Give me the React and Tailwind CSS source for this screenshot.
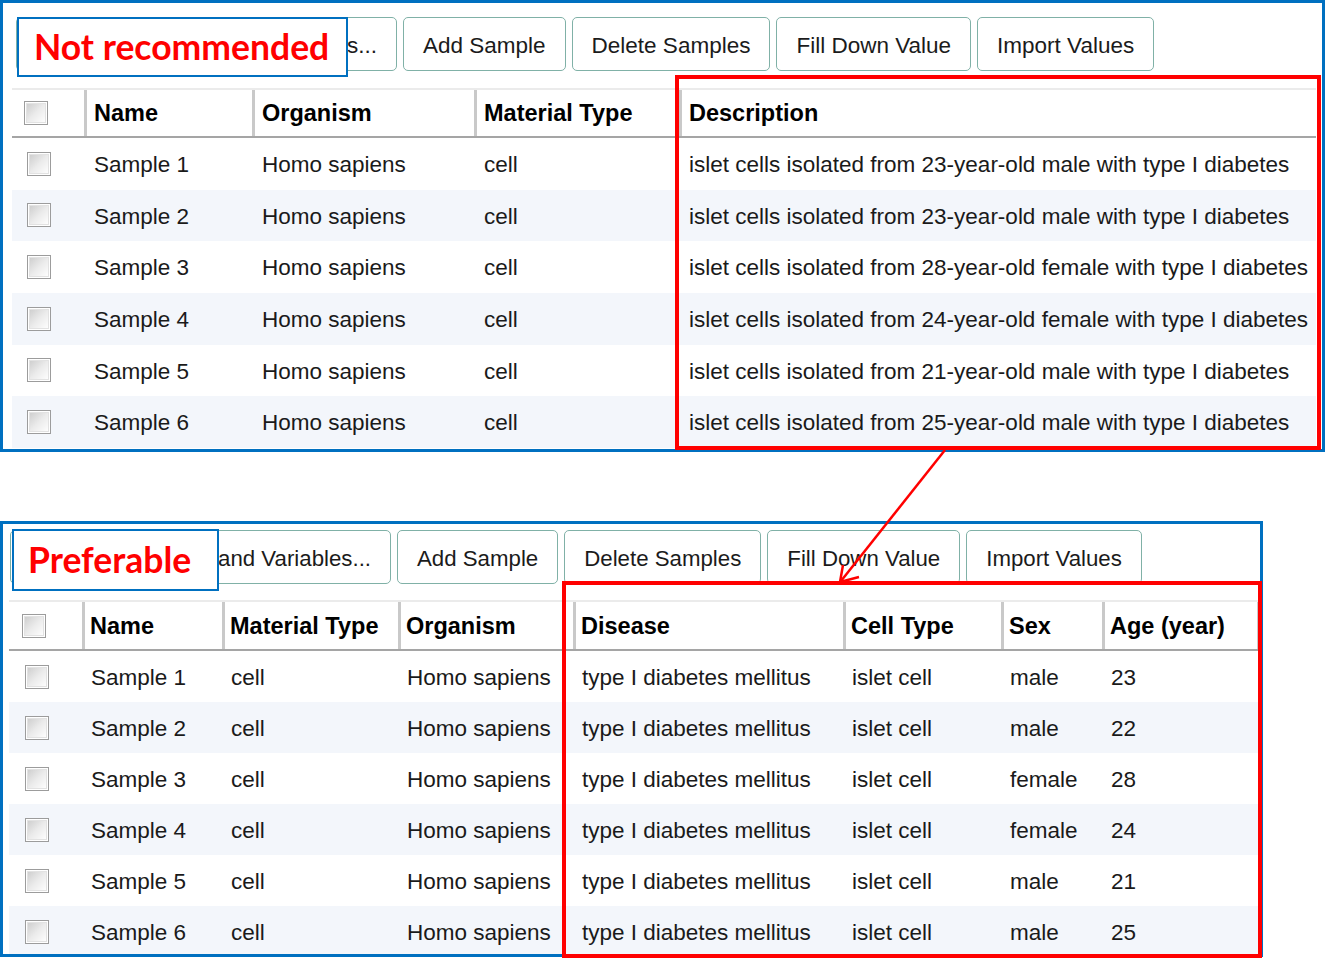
import React from "react";

function Checkbox() {
  return (
    <div className="w-[24px] h-[24px] border border-[#9c9c9c] p-[1px] bg-white">
      <div className="w-full h-full border border-[#e2e2e2] bg-linear-to-br from-[#cfcfcf] via-[#ebebeb] to-[#fdfdfd]" />
    </div>
  );
}

function Btn({ children, first, small }) {
  return (
    <div
      className={`h-[54px] pt-[3px] border border-[#80b1a7] rounded-[5px] bg-white flex items-center text-[#1b1b1b] whitespace-nowrap shrink-0 ${
        small ? "text-[22.25px]" : "text-[22.5px]"
      } ${first ? "w-[381px] justify-end pr-[19px] overflow-hidden" : "px-[19px]"}`}
    >
      {children}
    </div>
  );
}

function Toolbar({ className, small }) {
  return (
    <div className={`flex gap-[6px] ${className}`}>
      <Btn first small={small}>Add Characteristics and Variables...</Btn>
      <Btn small={small}>Add Sample</Btn>
      <Btn small={small}>Delete Samples</Btn>
      <Btn small={small}>Fill Down Value</Btn>
      <Btn small={small}>Import Values</Btn>
    </div>
  );
}

function Table({ cols, rows, headerH, rowH, hPad, bPad, cbHeaderPad, cbRowPad, endSep, className }) {
  return (
    <div className={className}>
      <div
        className="flex border-t-2 border-b-2 border-t-[#ebebeb] border-b-[#a5a5a5] bg-white"
        style={{ height: headerH }}
      >
        {cols.map((c, i) =>
          i === 0 ? (
            <div key={i} className="flex items-center shrink-0" style={{ width: c.w, paddingLeft: cbHeaderPad }}>
              <Checkbox />
            </div>
          ) : (
            <div
              key={i}
              className="flex items-center shrink-0 pt-[2px] border-l-[3px] border-[#c9c9c9] text-[23.5px] font-bold text-black whitespace-nowrap"
              style={{ width: c.w, paddingLeft: hPad }}
            >
              {c.label}
            </div>
          )
        )}
        {endSep && <div className="w-[3px] shrink-0 bg-[#c9c9c9]" />}
      </div>
      {rows.map((r, ri) => (
        <div
          key={ri}
          className={`flex ${ri % 2 === 1 ? "bg-[#f3f6fb]" : "bg-white"}`}
          style={{ height: rowH }}
        >
          {cols.map((c, i) =>
            i === 0 ? (
              <div key={i} className="flex items-center shrink-0" style={{ width: c.w, paddingLeft: cbRowPad }}>
                <Checkbox />
              </div>
            ) : (
              <div
                key={i}
                className="flex items-center shrink-0 pt-[2px] text-[22.5px] text-[#1a1a1a] whitespace-nowrap"
                style={{ width: c.w, paddingLeft: bPad }}
              >
                {r[i - 1]}
              </div>
            )
          )}
        </div>
      ))}
    </div>
  );
}

const topCols = [
  { w: 72 },
  { w: 168, label: "Name" },
  { w: 222, label: "Organism" },
  { w: 205, label: "Material Type" },
  { w: 637, label: "Description" },
];

const ages = [
  ["23", "male"],
  ["23", "male"],
  ["28", "female"],
  ["24", "female"],
  ["21", "male"],
  ["25", "male"],
];

const topRows = ages.map(([a, s], i) => [
  `Sample ${i + 1}`,
  "Homo sapiens",
  "cell",
  `islet cells isolated from ${a}-year-old ${s} with type I diabetes`,
]);

const botCols = [
  { w: 73 },
  { w: 140, label: "Name" },
  { w: 176, label: "Material Type" },
  { w: 175, label: "Organism" },
  { w: 270, label: "Disease" },
  { w: 158, label: "Cell Type" },
  { w: 101, label: "Sex" },
  { w: 155, label: "Age (year)" },
];

const botData = [
  ["male", "23"],
  ["male", "22"],
  ["female", "28"],
  ["female", "24"],
  ["male", "21"],
  ["male", "25"],
];

const botRows = botData.map(([s, a], i) => [
  `Sample ${i + 1}`,
  "cell",
  "Homo sapiens",
  "type I diabetes mellitus",
  "islet cell",
  s,
  a,
]);

export default function App() {
  return (
    <div className="relative w-[1325px] h-[959px] bg-white overflow-hidden font-['Liberation_Sans',Arial,sans-serif]">
      {/* Top panel */}
      <div className="relative w-[1325px] h-[452px] border-[3px] border-[#0070c0] overflow-hidden">
        <Toolbar className="pt-[14px] pl-[13px]" />
        <Table
          className="mt-[17px] ml-[9px] w-[1304px]"
          cols={topCols}
          rows={topRows}
          headerH={50}
          rowH={51.67}
          hPad={7}
          bPad={10}
          cbHeaderPad={12}
          cbRowPad={15}
        />
        <div className="absolute left-[14px] top-[14px] w-[331px] h-[60px] border-2 border-[#0070c0] bg-white flex items-center pl-[15px]">
          <span className="font-['Lato',sans-serif] font-bold text-[35.5px] text-[#ff0000] leading-none whitespace-nowrap">
            Not recommended
          </span>
        </div>
      </div>

      {/* Bottom panel */}
      <div className="relative mt-[69px] w-[1263px] h-[436px] border-[3px] border-[#0070c0] overflow-hidden">
        <Toolbar className="pt-[6px] pl-[7px]" small />
        <Table
          className="mt-[16px] ml-[6px] w-[1254px]"
          cols={botCols}
          rows={botRows}
          headerH={51}
          rowH={51}
          hPad={5}
          bPad={9}
          cbHeaderPad={13}
          cbRowPad={16}
          endSep
        />
        <div className="absolute left-[9px] top-[5px] w-[207px] h-[62px] border-2 border-[#0070c0] bg-white flex items-center pl-[14px]">
          <span className="font-['Lato',sans-serif] font-bold text-[35.5px] text-[#ff0000] leading-none whitespace-nowrap">
            Preferable
          </span>
        </div>
      </div>

      {/* Red highlight boxes */}
      <div className="absolute left-[675px] top-[75px] w-[646px] h-[375px] border-[4px] border-[#ff0000] pointer-events-none" />
      <div className="absolute left-[562px] top-[581px] w-[700px] h-[377px] border-[4px] border-[#ff0000] pointer-events-none" />

      {/* Arrow */}
      <svg className="absolute left-0 top-0 pointer-events-none" width="1325" height="959" viewBox="0 0 1325 959">
        <line x1="945" y1="450" x2="841" y2="581" stroke="#ff0000" strokeWidth="2.5" />
        <polyline points="843,565 840,582 859,577" fill="none" stroke="#ff0000" strokeWidth="2.5" />
      </svg>
    </div>
  );
}
